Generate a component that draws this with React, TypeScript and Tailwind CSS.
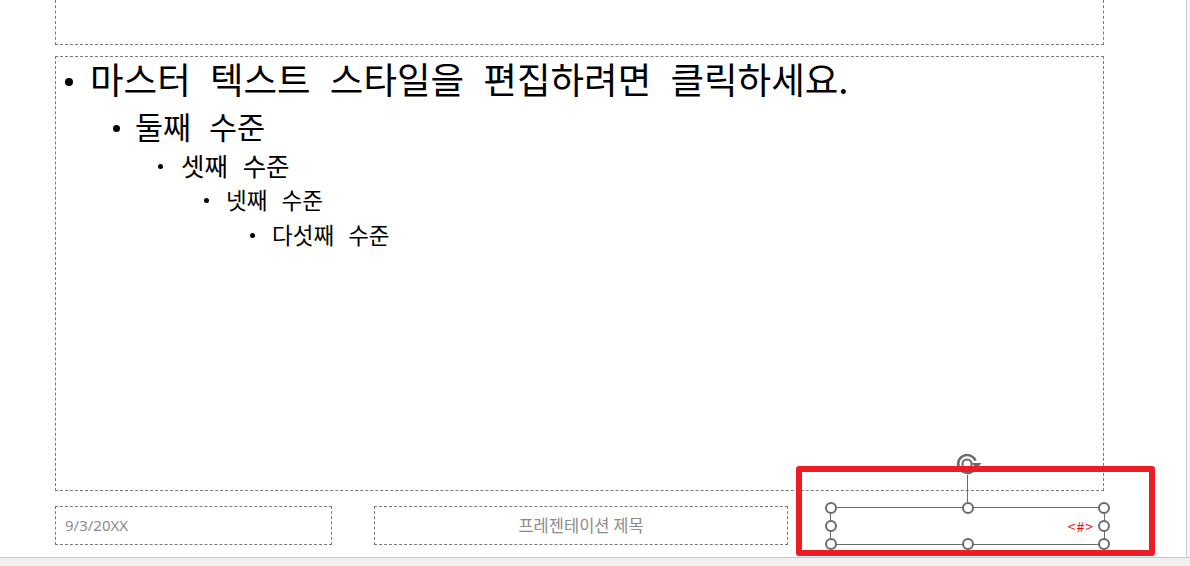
import React from "react";

const kr = "font-['Noto_Sans_CJK_KR','Noto_Sans',sans-serif]";

function Handle({ className }: { className: string }) {
  return (
    <div
      className={`absolute w-[12px] h-[12px] rounded-full border-2 border-[#6b6b6b] bg-white -translate-x-1/2 -translate-y-1/2 ${className}`}
    />
  );
}

function RotateIcon() {
  return (
    <svg width="34" height="26" viewBox="0 0 34 26" className="absolute left-[122px] top-[-56px]">
      <path
        d="M22.5 8.5 A9 9 0 1 0 21.8 16.8"
        fill="none"
        stroke="#6b6b6b"
        strokeWidth="2.5"
      />
      <circle cx="14" cy="12" r="4.6" fill="white" stroke="#6b6b6b" strokeWidth="2" />
      <polygon points="18.5,11 28.5,11 23.5,16.5" fill="#6b6b6b" />
    </svg>
  );
}

export default function App() {
  return (
    <div className={`w-[1190px] h-[566px] bg-[#f0f0f0] flex flex-col overflow-hidden ${kr}`}>
      <div className="h-[558px] flex border-b border-[#c8c8c8]">
        <div className="w-[1187px] bg-white border-r border-[#c8c8c8] relative pl-[55px]">
          {/* title placeholder */}
          <div className="w-[1049px] h-[45px] border-x border-b border-dashed border-[#7a7a7a]" />
          {/* body placeholder */}
          <div className="mt-[11px] w-[1049px] h-[435px] border border-dashed border-[#7a7a7a] text-black">
            <div className="flex items-center pl-[9px] h-[44px] text-[36.5px] leading-[44px] [word-spacing:11px]">
              <div className="w-[8px] h-[8px] rounded-full bg-black mt-[6px] shrink-0" />
              <span className="ml-[17px] whitespace-nowrap">마스터 텍스트 스타일을 편집하려면 클릭하세요.</span>
            </div>
            <div className="mt-[7px] flex items-center pl-[57px] h-[36px] text-[30.5px] leading-[36px] [word-spacing:11px]">
              <div className="w-[7px] h-[7px] rounded-full bg-black mt-[4px] shrink-0" />
              <span className="ml-[15px] whitespace-nowrap">둘째 수준</span>
            </div>
            <div className="mt-[5px] flex items-center pl-[102px] h-[32px] text-[25.5px] leading-[32px] [word-spacing:9px]">
              <div className="w-[5px] h-[5px] rounded-full bg-black mt-[3px] shrink-0" />
              <span className="ml-[18px] whitespace-nowrap">셋째 수준</span>
            </div>
            <div className="mt-[3px] flex items-center pl-[148px] h-[30px] text-[22.5px] leading-[30px] [word-spacing:9px]">
              <div className="w-[5px] h-[5px] rounded-full bg-black mt-[3px] shrink-0" />
              <span className="ml-[17px] whitespace-nowrap">넷째 수준</span>
            </div>
            <div className="mt-[5px] flex items-center pl-[194px] h-[30px] text-[22.5px] leading-[30px] [word-spacing:9px]">
              <div className="w-[5px] h-[5px] rounded-full bg-black mt-[3px] shrink-0" />
              <span className="ml-[17px] whitespace-nowrap">다섯째 수준</span>
            </div>
          </div>
          {/* footer */}
          <div className="mt-[15px] flex items-start h-[39px]">
            <div className="w-[277px] h-[39px] border border-dashed border-[#7a7a7a] flex items-center pl-[9px] text-[15px] text-[#8c8c8c] font-['Noto_Sans',sans-serif]">
              9/3/20XX
            </div>
            <div className="ml-[42px] w-[414px] h-[39px] border border-dashed border-[#7a7a7a] flex items-center justify-center text-[16.5px] text-[#8c8c8c]">
              프레젠테이션 제목
            </div>
            <div className="ml-[42px] mt-[1px] w-[275px] h-[38px] border border-[#6b6b6b] relative flex items-center justify-end pr-[10px]">
              <span className="text-[14px] text-[#ff0000] tracking-[1px] leading-none">&lt;#&gt;</span>
              <div className="absolute left-[136px] top-[-33px] w-px h-[33px] bg-[#6b6b6b]" />
              <RotateIcon />
              <Handle className="left-0 top-0" />
              <Handle className="left-1/2 top-0" />
              <Handle className="left-full top-0" />
              <Handle className="left-0 top-1/2" />
              <Handle className="left-full top-1/2" />
              <Handle className="left-0 top-full" />
              <Handle className="left-1/2 top-full" />
              <Handle className="left-full top-full" />
            </div>
          </div>
          {/* red highlight */}
          <div className="absolute left-[796px] top-[466px] w-[359px] h-[90px] border-[6px] border-[#ed1c24] rounded-[3px]" />
        </div>
        <div className="flex-1 bg-[#f7f7f7]" />
      </div>
    </div>
  );
}
